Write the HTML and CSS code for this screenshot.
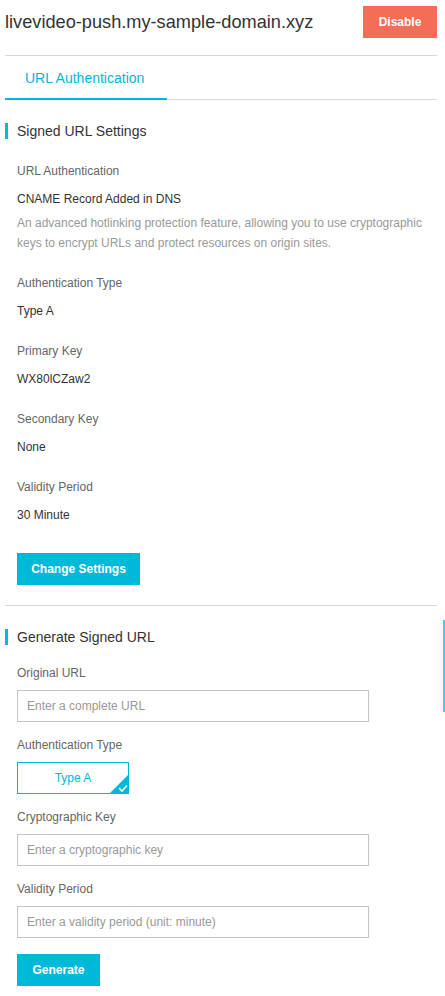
FILE: index.html
```html
<!DOCTYPE html>
<html>
<head>
<meta charset="utf-8">
<link rel="stylesheet" href="styles.css">
</head>
<body>
<div class="page">
  <header class="header">
    <h1 class="title">livevideo-push.my-sample-domain.xyz</h1>
    <button class="btn btn-danger">Disable</button>
  </header>
  <nav class="tabs">
    <div class="tab active">URL Authentication</div>
  </nav>

  <section class="section">
    <h2 class="section-title">Signed URL Settings</h2>
    <div class="field">
      <div class="label">URL Authentication</div>
      <div class="value">CNAME Record Added in DNS</div>
      <div class="desc">An advanced hotlinking protection feature, allowing you to use cryptographic keys to encrypt URLs and protect resources on origin sites.</div>
    </div>
    <div class="field">
      <div class="label">Authentication Type</div>
      <div class="value">Type A</div>
    </div>
    <div class="field">
      <div class="label">Primary Key</div>
      <div class="value">WX80lCZaw2</div>
    </div>
    <div class="field">
      <div class="label">Secondary Key</div>
      <div class="value">None</div>
    </div>
    <div class="field">
      <div class="label">Validity Period</div>
      <div class="value">30 Minute</div>
    </div>
    <button class="btn btn-primary btn-change">Change Settings</button>
  </section>

  <section class="section section-gen">
    <h2 class="section-title">Generate Signed URL</h2>
    <div class="form-item first">
      <div class="label">Original URL</div>
      <input class="input" type="text" placeholder="Enter a complete URL">
    </div>
    <div class="form-item">
      <div class="label">Authentication Type</div>
      <div class="choice">Type A
        <span class="corner">
          <svg width="20" height="20" viewBox="0 0 20 20"><polygon points="20,0 20,20 0,20" fill="#00b8d8"/><polyline points="10,14 13,17 18,11.5" fill="none" stroke="#fff" stroke-width="1.6"/></svg>
        </span>
      </div>
    </div>
    <div class="form-item">
      <div class="label">Cryptographic Key</div>
      <input class="input" type="text" placeholder="Enter a cryptographic key">
    </div>
    <div class="form-item">
      <div class="label">Validity Period</div>
      <input class="input" type="text" placeholder="Enter a validity period (unit: minute)">
    </div>
    <button class="btn btn-primary btn-gen">Generate</button>
  </section>
</div>
<div class="side-tab"></div>
</body>
</html>
```
FILE: styles.css
```css
* { box-sizing: border-box; }
html, body { margin: 0; padding: 0; background: #fff; }
body {
  font-family: "Liberation Sans", Arial, Helvetica, sans-serif;
  color: #333;
  width: 445px;
  overflow: hidden;
}
.page { padding: 0 8px 0 5px; }

.header {
  display: flex;
  justify-content: space-between;
  align-items: center;
  padding: 6px 0 17px 0;
  border-bottom: 1px solid #d7d7d7;
}
.title {
  margin: 0;
  font-size: 18.2px;
  font-weight: normal;
  color: #333;
  line-height: 30px;
}
.btn {
  border: none;
  font-family: inherit;
  font-size: 12px;
  font-weight: bold;
  color: #fff;
  height: 32px;
  padding: 0 17px;
  cursor: pointer;
}
.btn-danger { background: #f46d56; width: 74px; padding: 0; }
.btn-primary { background: #00b8d8; }

.tabs {
  display: flex;
  border-bottom: 1px solid #d7d7d7;
  height: 44px;
}
.tab {
  font-size: 14px;
  color: #00b8d8;
  padding: 0 20px;
  width: 162px;
  height: 44px;
  margin-bottom: -1px;
}
.tab.active { border-bottom: 2px solid #00b8d8; line-height: 44px; }

.section-title {
  margin: 23px 0 0 0;
  font-size: 14px;
  font-weight: normal;
  color: #333;
  line-height: 16px;
  border-left: 3px solid #00b8d8;
  padding-left: 9px;
}

.section { padding-bottom: 20px; border-bottom: 1px solid #d7d7d7; }

.field { padding-left: 12px; margin-top: 20px; }
.field:first-of-type { margin-top: 22px; }
.label {
  font-size: 12px;
  color: #666;
  line-height: 20px;
}
.value {
  font-size: 12px;
  color: #333;
  line-height: 20px;
  margin-top: 8px;
}
.desc {
  font-size: 12px;
  color: #999;
  line-height: 20px;
  margin-top: 4px;
}
.btn-change { margin: 28px 0 0 12px; width: 123px; padding: 0; }

.section-gen { border-bottom: none; padding-bottom: 0; }
.form-item { padding-left: 12px; margin-top: 13px; }
.form-item.first { margin-top: 18px; }
.form-item .label { margin-bottom: 7px; }
.input {
  display: block;
  width: 352px;
  height: 32px;
  border: 1px solid #c4c4c4;
  border-radius: 0;
  padding: 0 9px;
  font-family: inherit;
  font-size: 12px;
  color: #333;
  outline: none;
}
.input::placeholder { color: #999; }

.choice {
  position: relative;
  width: 112px;
  height: 32px;
  border: 1px solid #00b8d8;
  color: #00b8d8;
  font-size: 12px;
  line-height: 30px;
  text-align: center;
}
.corner {
  position: absolute;
  right: -1px;
  bottom: -1px;
  width: 20px;
  height: 20px;
  line-height: 0;
}
.btn-gen { margin: 16px 0 0 12px; width: 83px; padding: 0; }

.side-tab {
  position: absolute;
  top: 620px;
  right: 0;
  width: 2px;
  height: 92px;
  background: #3fd0e6;
  box-shadow: -2px 0 6px rgba(0,0,0,0.12);
}
```
